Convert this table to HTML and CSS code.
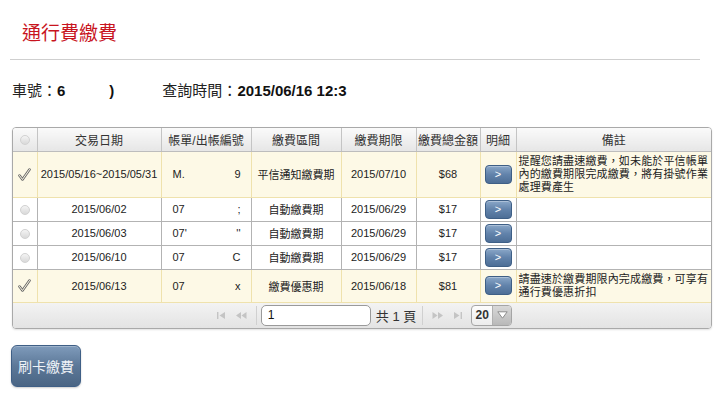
FILE: index.html
```html
<!DOCTYPE html>
<html lang="zh-Hant">
<head>
<meta charset="utf-8">
<link rel="stylesheet" href="styles.css">
</head>
<body>
<div class="page">
  <header class="head">
    <h1 class="title">通行費繳費</h1>
  </header>

  <div class="info">
    <span class="label">車號：</span><span class="val">6</span><span class="val gap">)</span>
    <span class="label time-label">查詢時間：</span><span class="val">2015/06/16 12:3</span>
  </div>

  <div class="grid">
    <table class="tbl">
      <colgroup>
        <col class="c-chk"><col class="c-date"><col class="c-bill"><col class="c-sec">
        <col class="c-due"><col class="c-amt"><col class="c-det"><col>
      </colgroup>
      <thead>
        <tr>
          <th><span class="radio"></span></th>
          <th>交易日期</th>
          <th>帳單/出帳編號</th>
          <th>繳費區間</th>
          <th>繳費期限</th>
          <th>繳費總金額</th>
          <th>明細</th>
          <th>備註</th>
        </tr>
      </thead>
      <tbody>
        <tr class="sel">
          <td><svg class="chk" width="13" height="13" viewBox="0 0 13 13"><path d="M1.5 7.5 L4.5 11.5 L11.5 1.5" fill="none" stroke="#6b6b6b" stroke-width="2.6" stroke-linejoin="round" stroke-linecap="round"/><path d="M1.5 7.5 L4.5 11.5 L11.5 1.5" fill="none" stroke="#fdf9e6" stroke-width="1" stroke-linejoin="round" stroke-linecap="round"/></svg></td>
          <td>2015/05/16~2015/05/31</td>
          <td><div class="bill"><span>M.</span><span>9</span></div></td>
          <td>平信通知繳費期</td>
          <td>2015/07/10</td>
          <td>$68</td>
          <td><button class="go">&gt;</button></td>
          <td class="note">提醒您請盡速繳費，如未能於平信帳單內的繳費期限完成繳費，將有掛號作業處理費產生</td>
        </tr>
        <tr>
          <td><span class="radio"></span></td>
          <td>2015/06/02</td>
          <td><div class="bill"><span>07</span><span>;</span></div></td>
          <td>自動繳費期</td>
          <td>2015/06/29</td>
          <td>$17</td>
          <td><button class="go">&gt;</button></td>
          <td class="note"></td>
        </tr>
        <tr>
          <td><span class="radio"></span></td>
          <td>2015/06/03</td>
          <td><div class="bill"><span>07'</span><span>''</span></div></td>
          <td>自動繳費期</td>
          <td>2015/06/29</td>
          <td>$17</td>
          <td><button class="go">&gt;</button></td>
          <td class="note"></td>
        </tr>
        <tr>
          <td><span class="radio"></span></td>
          <td>2015/06/10</td>
          <td><div class="bill"><span>07</span><span>C</span></div></td>
          <td>自動繳費期</td>
          <td>2015/06/29</td>
          <td>$17</td>
          <td><button class="go">&gt;</button></td>
          <td class="note"></td>
        </tr>
        <tr class="sel">
          <td><svg class="chk" width="13" height="13" viewBox="0 0 13 13"><path d="M1.5 7.5 L4.5 11.5 L11.5 1.5" fill="none" stroke="#6b6b6b" stroke-width="2.6" stroke-linejoin="round" stroke-linecap="round"/><path d="M1.5 7.5 L4.5 11.5 L11.5 1.5" fill="none" stroke="#fdf9e6" stroke-width="1" stroke-linejoin="round" stroke-linecap="round"/></svg></td>
          <td>2015/06/13</td>
          <td><div class="bill"><span>07</span><span>x</span></div></td>
          <td>繳費優惠期</td>
          <td>2015/06/18</td>
          <td>$81</td>
          <td><button class="go">&gt;</button></td>
          <td class="note">請盡速於繳費期限內完成繳費，可享有通行費優惠折扣</td>
        </tr>
      </tbody>
    </table>
    <div class="pager">
      <svg class="pi" width="9" height="7" viewBox="0 0 9 7"><rect x="0" y="0" width="1.4" height="7" fill="#c4c4c4"/><path d="M8 0 L2.5 3.5 L8 7Z" fill="#c4c4c4"/></svg>
      <svg class="pi" width="11" height="7" viewBox="0 0 11 7"><path d="M5 0 L0 3.5 L5 7Z M10.5 0 L5.5 3.5 L10.5 7Z" fill="#c4c4c4"/></svg>
      <span class="sep"></span>
      <input class="pg-input" type="text" value="1">
      <span class="pg-text">共 1 頁</span>
      <span class="sep"></span>
      <svg class="pi" width="11" height="7" viewBox="0 0 11 7"><path d="M0.5 0 L5.5 3.5 L0.5 7Z M6 0 L11 3.5 L6 7Z" fill="#c4c4c4"/></svg>
      <svg class="pi" width="9" height="7" viewBox="0 0 9 7"><path d="M1 0 L6.5 3.5 L1 7Z" fill="#c4c4c4"/><rect x="7.6" y="0" width="1.4" height="7" fill="#c4c4c4"/></svg>
      <div class="sel-box"><span class="sel-val">20</span><span class="sel-arrow"><svg width="11" height="8" viewBox="0 0 11 8"><path d="M0.8 0.8 L10.2 0.8 L5.5 7.2Z" fill="#fff" stroke="#8d8d8d" stroke-width="1" stroke-linejoin="round"/></svg></span></div>
    </div>
  </div>

  <button class="pay">刷卡繳費</button>
</div>
</body>
</html>
```

FILE: styles.css
```css
* { box-sizing: border-box; }
html, body { margin: 0; padding: 0; background: #fff; }
body {
  font-family: "Liberation Sans", "Noto Sans CJK TC", sans-serif;
  color: #222;
  width: 720px;
  height: 393px;
  overflow: hidden;
}
.head {
  margin: 0 20px 0 10px;
  padding: 22px 0 14px 12px;
  border-bottom: 1px solid #cfcfcf;
}
.title {
  margin: 0;
  font-size: 19px;
  line-height: 23px;
  font-weight: normal;
  color: #c8141e;
}
.info {
  margin: 21px 0 0 12px;
  font-size: 15px;
  line-height: 20px;
  display: flex;
  align-items: baseline;
  white-space: nowrap;
  color: #222;
}
.val { font-weight: bold; color: #111; }
.gap { margin-left: 44px; }
.time-label { margin-left: 48px; }

.grid {
  margin: 26px 0 0 12px;
  width: 700px;
  border: 1px solid #a9a9a9;
  border-radius: 4px;
  overflow: hidden;
  box-shadow: 0 1px 2px rgba(0,0,0,0.12);
}
.tbl {
  width: 100%;
  border-collapse: collapse;
  table-layout: fixed;
}
.c-chk { width: 24px; }
.c-date { width: 124px; }
.c-bill { width: 90px; }
.c-sec { width: 90px; }
.c-due { width: 75px; }
.c-amt { width: 64px; }
.c-det { width: 36px; }
.tbl th {
  height: 23px;
  padding: 0;
  font-size: 12px;
  font-weight: normal;
  color: #333;
  background: linear-gradient(#fafafa, #e6e6e6);
  border-right: 1px solid #c4c4c4;
  border-bottom: 1px solid #bdbdbd;
  text-align: center;
  vertical-align: middle;
}
.tbl th:last-child, .tbl td:last-child { border-right: none; }
.tbl td {
  padding: 2px 2px;
  font-size: 11px;
  color: #222;
  text-align: center;
  vertical-align: middle;
  border-right: 1px solid #b3b3b3;
  border-bottom: 1px solid #b3b3b3;
  height: 24px;
  white-space: nowrap;
}
.tbl tr.sel td {
  background: #fdf9e6;
  border-right-color: #efe2ad;
  border-bottom-color: #efe2ad;
}
.tbl td.note {
  text-align: left;
  white-space: normal;
  font-size: 11px;
  line-height: 13px;
  padding: 3px 1px 3px 2px;
  letter-spacing: 0.15px;
}
.bill {
  display: flex;
  justify-content: space-between;
  padding: 0 8px 0 9px;
}
.radio {
  display: inline-block;
  width: 10px;
  height: 10px;
  border-radius: 50%;
  background: linear-gradient(#f4f4f4, #d9d9d9);
  border: 1px solid #d2d2d2;
  vertical-align: middle;
}
.chk { display: block; margin: 0 auto; }
.go {
  width: 27px;
  height: 19px;
  padding: 0;
  border: 1px solid #3e5f86;
  border-radius: 4px;
  background: linear-gradient(#8aa7c8, #6283ab 50%, #4d6e96);
  color: #fff;
  font-family: "Liberation Sans", sans-serif;
  font-size: 11px;
  line-height: 17px;
  display: block;
  margin: 0 auto;
  box-shadow: inset 0 1px 0 rgba(255,255,255,0.3);
}

.pager {
  height: 25px;
  background: linear-gradient(#f3f3f3, #e3e3e3);
  display: flex;
  align-items: center;
  justify-content: center;
  font-size: 13px;
  color: #333;
}
.pi { margin: 0 5px; }
.sep {
  width: 1px;
  height: 19px;
  background: #d0d0d0;
  margin: 0 4px;
}
.pg-input {
  width: 110px;
  height: 21px;
  border: 1px solid #9a9a9a;
  border-radius: 5px;
  padding: 0 6px;
  font-family: "Liberation Sans", sans-serif;
  font-size: 12px;
  color: #111;
  background: #fff;
}
.pg-text { margin: 0 2px 0 5px; font-size: 13px; color: #333; }
.sel-box {
  margin-left: 4px;
  width: 41px;
  height: 21px;
  border: 1px solid #a5a5a5;
  border-radius: 4px;
  display: flex;
  overflow: hidden;
  background: linear-gradient(#fdfdfd, #ececec);
}
.sel-val {
  width: 20px;
  font-size: 12px;
  line-height: 19px;
  text-align: center;
  font-weight: bold;
  color: #333;
}
.sel-arrow {
  flex: 1;
  display: flex;
  align-items: center;
  justify-content: center;
  background: linear-gradient(#d8d8d8, #b9b9b9);
  border-left: 1px solid #b0b0b0;
}

.pay {
  margin: 16px 0 0 11px;
  width: 70px;
  height: 42px;
  border: 1px solid #3f5f86;
  border-radius: 6px;
  background: linear-gradient(#7f9bbb, #5c7898 50%, #4a6584);
  color: #eef2f7;
  font-family: "Liberation Sans", "Noto Sans CJK TC", sans-serif;
  font-size: 14px;
  padding: 0;
  box-shadow: inset 0 1px 0 rgba(255,255,255,0.25), 0 1px 2px rgba(0,0,0,0.2);
  display: block;
}
```
